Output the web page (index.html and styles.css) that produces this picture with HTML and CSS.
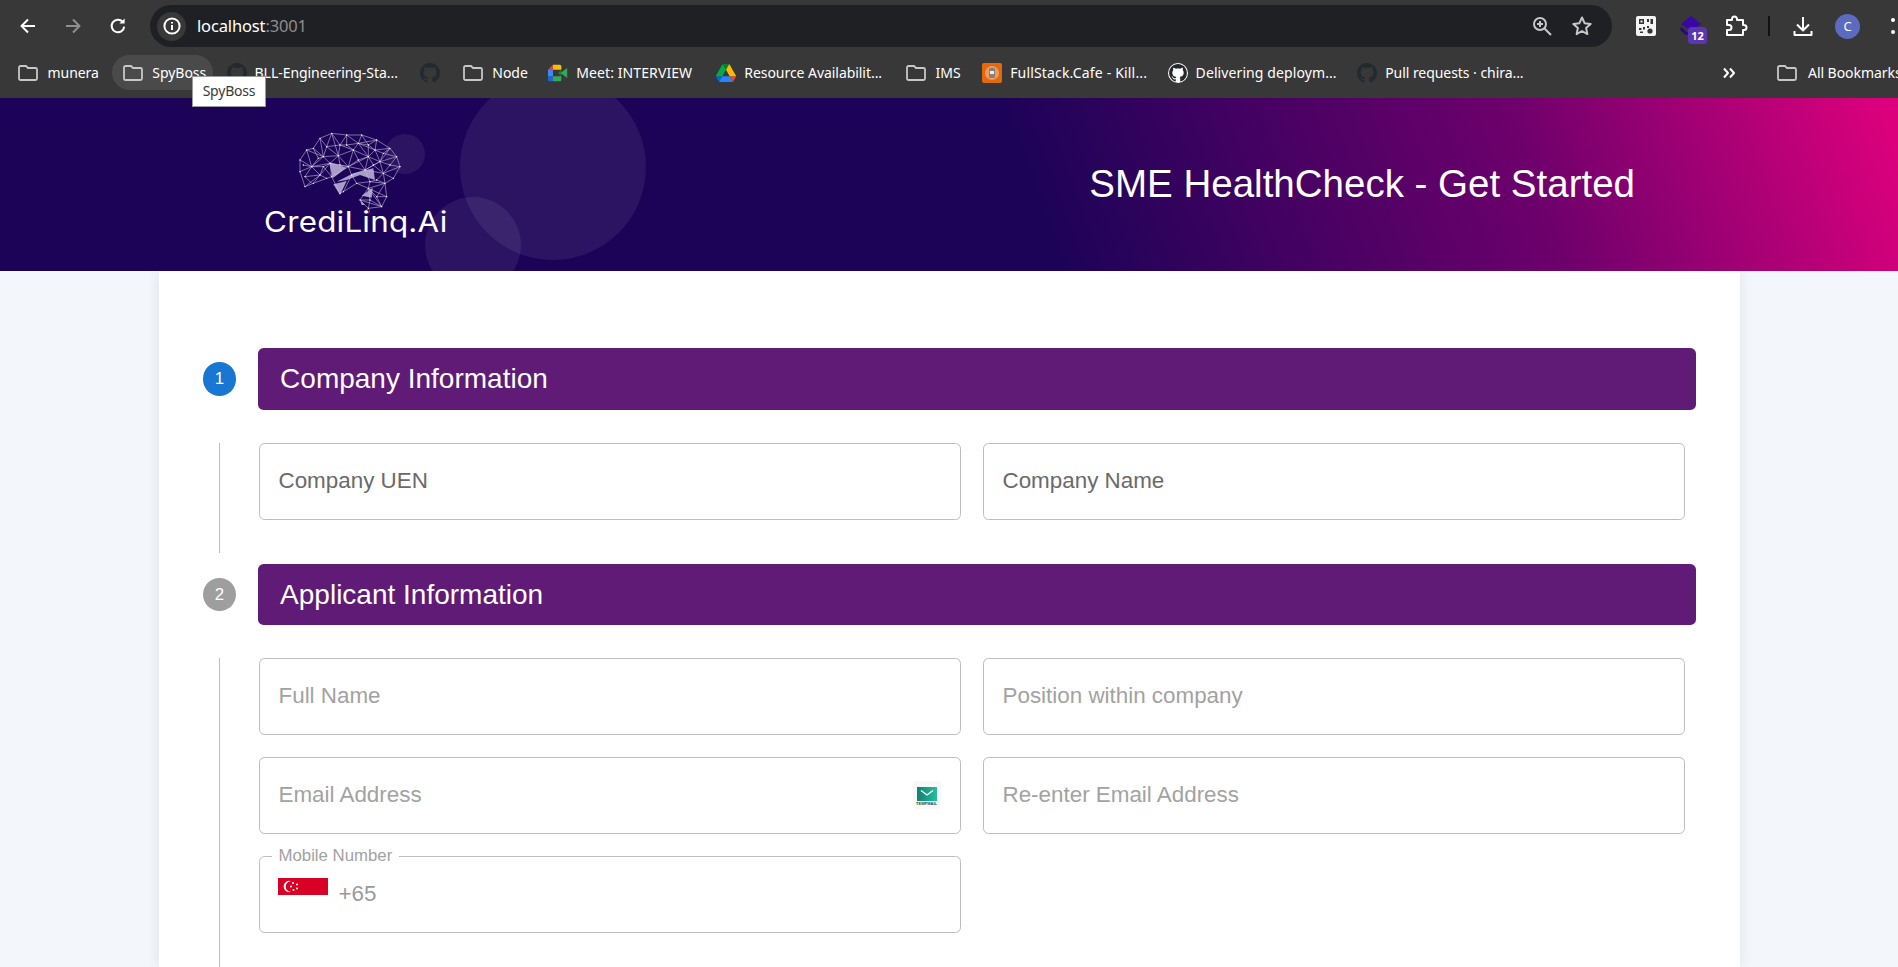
FILE: index.html
```html
<!DOCTYPE html>
<html lang="en">
<head>
<meta charset="utf-8">
<title>SME HealthCheck - Get Started</title>
<link rel="stylesheet" href="styles.css">
</head>
<body>
<div class="browser">
  <div class="toolbar">
    <div class="nav-btn"><svg width="20" height="20" viewBox="0 0 20 20"><path d="M17 10H4M10 3.5 3.5 10l6.5 6.5" class="ic-white"/></svg></div>
    <div class="nav-btn"><svg width="20" height="20" viewBox="0 0 20 20"><path d="M3 10h13M10 3.5l6.5 6.5-6.5 6.5" class="ic-grey"/></svg></div>
    <div class="nav-btn"><svg width="20" height="20" viewBox="0 0 20 20"><path d="M16.2 10.6a6.3 6.3 0 1 1-1.6-4.9" class="ic-white"/><path d="M16.6 2.4v5.2h-5.2z" fill="#fff"/></svg></div>
    <div class="omnibox">
      <div class="site-chip"><svg width="20" height="20" viewBox="0 0 20 20"><circle cx="10" cy="10" r="7.6" class="ic-white"/><path d="M10 9v5M10 6v1.6" class="ic-white"/></svg></div>
      <span class="url">localhost<span class="url-port">:3001</span></span>
      <div class="omni-right">
        <svg width="22" height="22" viewBox="0 0 22 22"><circle cx="9" cy="9" r="6" class="ic-soft"/><path d="M13.5 13.5 20 20M6 9h6M9 6v6" class="ic-soft"/></svg>
        <svg width="22" height="22" viewBox="0 0 22 22"><path d="m11 2.5 2.6 5.7 6.1.7-4.6 4.1 1.3 6.1L11 16l-5.4 3.1 1.3-6.1-4.6-4.1 6.1-.7z" class="ic-soft"/></svg>
      </div>
    </div>
    <div class="tools">
      <div class="slot slot-qr"><svg width="20" height="20" viewBox="0 0 20 20"><rect width="20" height="20" rx="2" fill="#f4f4f4"/><path d="M3 3h5v5H3zM4.500 4.500v2h2v-2zM11 3h2v3h-2zM14.500 3H17v5h-2.500zM3 12h2.500v2H3zM7 11h2v2.500H7zM4 15.500h3V17H4zM11 10h2v2h-2z" fill="#333" fill-rule="evenodd"/><circle cx="14" cy="15" r="2.600" fill="#333"/></svg></div>
      <div class="slot slot-ext">
        <svg width="24" height="24" viewBox="0 0 24 24"><path d="M12 2 22 10 12 17 2 10z" fill="#3a06a8"/><path d="M2 13l8 7-3 1-6-5z" fill="#25087a"/></svg>
        <span class="badge">12</span>
      </div>
      <div class="slot slot-puzzle"><svg width="24" height="24" viewBox="0 0 24 24"><path d="M3 6h5V5a2.5 2.5 0 0 1 5 0v1h6v5h1a2.5 2.5 0 0 1 0 5h-1v5H3v-5h2a2.5 2.5 0 0 0 0-5H3z" class="ic-white"/></svg></div>
      <div class="tool-sep"></div>
      <div class="slot slot-dl"><svg width="24" height="24" viewBox="0 0 24 24"><path d="M12 3v13M6 10.500l6 6 6-6M3.500 17v4h17v-4" class="ic-white"/></svg></div>
      <div class="avatar">C</div>
      <div class="menu-dots"><i></i><i></i></div>
    </div>
  </div>
  <div class="bookmarks">
    <div class="bm"><svg class="folder" viewBox="0 0 20 16"><path d="M1 2.500A1.500 1.500 0 0 1 2.500 1H8l2 2h7.500A1.500 1.500 0 0 1 19 4.500v9a1.500 1.500 0 0 1-1.500 1.500h-15A1.500 1.500 0 0 1 1 13.500z"/></svg><span>munera</span></div>
    <div class="bm bm-hover"><svg class="folder" viewBox="0 0 20 16"><path d="M1 2.500A1.500 1.500 0 0 1 2.500 1H8l2 2h7.500A1.500 1.500 0 0 1 19 4.500v9a1.500 1.500 0 0 1-1.500 1.500h-15A1.500 1.500 0 0 1 1 13.500z"/></svg><span>SpyBoss</span></div>
    <div class="bm"><svg class="gh" viewBox="0 0 16 16"><path class="gh-dark" d="M8 0C3.580 0 0 3.580 0 8c0 3.540 2.290 6.530 5.470 7.590.4.070.55-.17.55-.38 0-.19-.01-.82-.01-1.490-2.010.37-2.530-.49-2.690-.94-.09-.23-.48-.94-.82-1.130-.28-.15-.68-.52-.01-.53.63-.01 1.080.58 1.230.82.72 1.210 1.870.87 2.330.66.070-.52.28-.87.51-1.070-1.780-.2-3.640-.89-3.640-3.950 0-.87.31-1.590.82-2.150-.08-.2-.36-1.020.08-2.120 0 0 .67-.21 2.200.82.64-.18 1.320-.27 2-.27.68 0 1.360.09 2 .27 1.530-1.040 2.200-.82 2.200-.82.44 1.100.16 1.920.08 2.120.51.56.82 1.270.82 2.150 0 3.070-1.870 3.750-3.650 3.950.29.25.54.73.54 1.480 0 1.070-.01 1.930-.01 2.200 0 .21.15.46.55.38A8.013 8.013 0 0 0 16 8c0-4.420-3.580-8-8-8z"/></svg><span>BLL-Engineering-Sta...</span></div>
    <div class="bm bm-icon"><svg class="gh" viewBox="0 0 16 16"><path class="gh-dark" d="M8 0C3.580 0 0 3.580 0 8c0 3.540 2.290 6.530 5.470 7.590.4.070.55-.17.55-.38 0-.19-.01-.82-.01-1.490-2.010.37-2.530-.49-2.690-.94-.09-.23-.48-.94-.82-1.130-.28-.15-.68-.52-.01-.53.63-.01 1.080.58 1.230.82.72 1.210 1.870.87 2.330.66.070-.52.28-.87.51-1.070-1.780-.2-3.640-.89-3.640-3.950 0-.87.31-1.590.82-2.150-.08-.2-.36-1.020.08-2.120 0 0 .67-.21 2.200.82.64-.18 1.320-.27 2-.27.68 0 1.360.09 2 .27 1.530-1.040 2.200-.82 2.200-.82.44 1.100.16 1.920.08 2.120.51.56.82 1.270.82 2.150 0 3.070-1.870 3.750-3.650 3.950.29.25.54.73.54 1.480 0 1.070-.01 1.930-.01 2.200 0 .21.15.46.55.38A8.013 8.013 0 0 0 16 8c0-4.420-3.580-8-8-8z"/></svg></div>
    <div class="bm"><svg class="folder" viewBox="0 0 20 16"><path d="M1 2.500A1.500 1.500 0 0 1 2.500 1H8l2 2h7.500A1.500 1.500 0 0 1 19 4.500v9a1.500 1.500 0 0 1-1.500 1.500h-15A1.500 1.500 0 0 1 1 13.500z"/></svg><span>Node</span></div>
    <div class="bm bm-wide"><svg class="fav fav-meet" viewBox="0 0 24 20"><path d="M0 6 6 0v6z" fill="#ea4335"/><path d="M0 6h6v8H0z" fill="#4285f4"/><path d="M0 14h6v6H2a2 2 0 0 1-2-2z" fill="#1967d2"/><path d="M6 0h8a2 2 0 0 1 2 2v4H6z" fill="#fbbc04"/><path d="M6 14h10v4a2 2 0 0 1-2 2H6z" fill="#34a853"/><path d="M16 6v8l-4-4z" fill="#188038"/><path d="M15 10l8-6v12z" fill="#34a853"/></svg><span>Meet: INTERVIEW</span></div>
    <div class="bm"><svg class="fav" viewBox="0 0 87.300 78"><path d="m6.600 66.850 3.850 6.650c.8 1.400 1.950 2.500 3.300 3.300l13.750-23.800h-27.500c0 1.550.4 3.100 1.200 4.500z" fill="#0066da"/><path d="m43.650 25-13.750-23.800c-1.350.8-2.500 1.900-3.300 3.300l-25.400 44a9.060 9.060 0 0 0-1.200 4.500h27.500z" fill="#00ac47"/><path d="m73.550 76.800c1.350-.8 2.500-1.900 3.300-3.300l1.600-2.750 7.650-13.250c.8-1.400 1.200-2.950 1.200-4.500h-27.502l5.852 11.500z" fill="#ea4335"/><path d="m43.650 25 13.750-23.800c-1.350-.8-2.900-1.200-4.500-1.200h-18.500c-1.600 0-3.150.45-4.500 1.200z" fill="#00832d"/><path d="m59.800 53h-32.300l-13.750 23.800c1.350.8 2.900 1.200 4.500 1.200h50.800c1.600 0 3.150-.45 4.500-1.200z" fill="#2684fc"/><path d="m73.400 26.500-12.700-22c-.8-1.400-1.950-2.500-3.300-3.300l-13.750 23.800 16.150 28h27.450c0-1.550-.4-3.100-1.200-4.500z" fill="#ffba00"/></svg><span>Resource Availabilit...</span></div>
    <div class="bm"><svg class="folder" viewBox="0 0 20 16"><path d="M1 2.500A1.500 1.500 0 0 1 2.500 1H8l2 2h7.500A1.500 1.500 0 0 1 19 4.500v9a1.500 1.500 0 0 1-1.500 1.500h-15A1.500 1.500 0 0 1 1 13.500z"/></svg><span>IMS</span></div>
    <div class="bm bm-wider"><svg class="fav-sq" viewBox="0 0 20 20"><rect width="20" height="20" rx="2" fill="#e26a0d"/><circle cx="10" cy="10" r="7" fill="#ee9a62"/><rect x="7" y="5" width="6" height="10" rx="1" fill="#8c8078"/><rect x="8" y="8" width="4" height="3" fill="#eee"/></svg><span>FullStack.Cafe - Kill...</span></div>
    <div class="bm bm-wide"><svg class="gh" viewBox="-1 -1 18 18"><circle cx="8" cy="8" r="9" fill="#fff"/><path fill="#24292f" d="M8 0C3.580 0 0 3.580 0 8c0 3.540 2.290 6.530 5.470 7.590.4.070.55-.17.55-.38 0-.19-.01-.82-.01-1.490-2.010.37-2.530-.49-2.690-.94-.09-.23-.48-.94-.82-1.130-.28-.15-.68-.52-.01-.53.63-.01 1.080.58 1.230.82.72 1.210 1.870.87 2.330.66.070-.52.28-.87.51-1.070-1.780-.2-3.640-.89-3.640-3.950 0-.87.31-1.590.82-2.150-.08-.2-.36-1.020.08-2.120 0 0 .67-.21 2.200.82.64-.18 1.320-.27 2-.27.68 0 1.360.09 2 .27 1.530-1.040 2.200-.82 2.200-.82.44 1.100.16 1.920.08 2.120.51.56.82 1.270.82 2.150 0 3.070-1.870 3.750-3.650 3.950.29.25.54.73.54 1.480 0 1.070-.01 1.930-.01 2.200 0 .21.15.46.55.38A8.013 8.013 0 0 0 16 8c0-4.420-3.580-8-8-8z"/></svg><span>Delivering deploym...</span></div>
    <div class="bm"><svg class="gh" viewBox="0 0 16 16"><path class="gh-dark" d="M8 0C3.580 0 0 3.580 0 8c0 3.540 2.290 6.530 5.470 7.590.4.070.55-.17.55-.38 0-.19-.01-.82-.01-1.490-2.010.37-2.530-.49-2.690-.94-.09-.23-.48-.94-.82-1.130-.28-.15-.68-.52-.01-.53.63-.01 1.080.58 1.230.82.72 1.210 1.870.87 2.330.66.070-.52.28-.87.51-1.070-1.780-.2-3.640-.89-3.640-3.950 0-.87.31-1.590.82-2.150-.08-.2-.36-1.020.08-2.120 0 0 .67-.21 2.200.82.64-.18 1.320-.27 2-.27.68 0 1.360.09 2 .27 1.530-1.040 2.200-.82 2.200-.82.44 1.100.16 1.920.08 2.120.51.56.82 1.270.82 2.150 0 3.070-1.870 3.750-3.650 3.950.29.25.54.73.54 1.480 0 1.070-.01 1.930-.01 2.200 0 .21.15.46.55.38A8.013 8.013 0 0 0 16 8c0-4.420-3.580-8-8-8z"/></svg><span>Pull requests · chira...</span></div>
    <div class="bm-end">
      <svg class="chev" viewBox="0 0 14 12"><path d="M2 1.500 6 6l-4 4.500M8 1.500 12 6l-4 4.500" class="ic-white"/></svg>
      <div class="bm-sep"></div>
      <svg class="folder" viewBox="0 0 20 16"><path d="M1 2.500A1.500 1.500 0 0 1 2.500 1H8l2 2h7.500A1.500 1.500 0 0 1 19 4.500v9a1.500 1.500 0 0 1-1.500 1.500h-15A1.500 1.500 0 0 1 1 13.500z"/></svg>
      <span class="bm-all">All Bookmarks</span>
    </div>
  </div>
  <div class="tooltip">SpyBoss</div>
</div>

<header class="hero">
  <i class="bubble bubble-big"></i>
  <i class="bubble bubble-small"></i>
  <i class="bubble bubble-low"></i>
  <div class="logo">
    <svg class="logo-mark" viewBox="0 0 360 270">
      <path class="mesh-fill" d="M118 112 170 128 128 160zM140 170 190 145 250 130 255 165 210 150 170 165zM130 178 170 168 150 210zM215 212 248 188 245 218zM210 225 225 240 215 240z"/>
      <path class="mesh" d="M30 105 50 75 70 70 90 40 125 25 170 30 215 30 260 45 300 70 320 95 330 125 310 160 285 175 290 215 275 245 235 250 210 225 235 190 200 175 160 200 150 205 125 155 110 160 70 175 45 185 30 140ZM50 75 100 95 70 70M90 40 100 95 145 92 125 25M125 25 150 60 170 30M150 60 145 92 190 75 150 60M170 30 205 55 215 30M205 55 190 75 235 95 205 55 260 45 255 75 205 55M255 75 235 95 270 110 255 75 300 70 270 110 320 95M30 105 65 125 50 75M65 125 100 95 120 115 145 92 175 125 190 75M175 125 235 95 225 135 175 125 120 115 65 125 90 150 120 115M30 140 65 125M225 135 270 110 280 145 225 135M280 145 330 125M280 145 310 160M90 150 45 185M90 150 110 160M125 155 120 115M125 155 175 125 185 150 225 135M280 145 285 175 240 170 225 135M240 170 200 175 185 150 160 200M240 170 235 190 285 175M235 190 290 215M235 190 275 245M210 225 275 245M70 70 85 100 65 125M85 100 100 95M40 120 65 125 45 155 65 175M45 155 90 150 70 175M100 95 110 65 145 92M110 65 150 60M110 65 90 40M125 25 110 65M170 30 170 60 190 75M170 60 205 55M170 60 150 60M235 60 205 55M235 60 215 30M235 60 260 45M235 60 255 75M235 60 235 95M280 85 255 75M280 85 300 70M280 85 270 110M280 85 320 95M300 120 270 110M300 120 320 95M300 120 330 125M300 120 280 145M145 92 150 120 120 115M150 120 175 125M205 105 190 75M205 105 235 95M205 105 175 125M205 105 225 135M250 120 235 95M250 120 270 110M250 120 225 135M250 120 280 145M100 125 120 115M100 125 65 125M100 125 90 150M100 125 125 155M260 165 280 145M260 165 240 170M260 165 285 175M260 215 235 190M260 215 290 215M260 215 275 245M260 215 285 175M240 225 235 190M240 225 210 225M240 225 235 250M240 225 275 245"/>
      <path class="mesh-dots" d="M30 105h0M50 75h0M70 70h0M90 40h0M125 25h0M170 30h0M215 30h0M260 45h0M300 70h0M320 95h0M330 125h0M310 160h0M285 175h0M290 215h0M275 245h0M235 250h0M210 225h0M235 190h0M200 175h0M160 200h0M150 205h0M125 155h0M110 160h0M70 175h0M45 185h0M30 140h0M100 95h0M145 92h0M150 60h0M190 75h0M205 55h0M235 95h0M255 75h0M270 110h0M65 125h0M120 115h0M175 125h0M225 135h0M90 150h0M280 145h0M185 150h0M240 170h0M85 100h0M110 65h0M170 60h0M235 60h0M280 85h0M300 120h0M150 120h0M205 105h0M250 120h0M100 125h0M260 165h0M260 215h0M240 225h0M40 120h0M45 155h0"/>
      <circle class="mesh-ring" cx="234" cy="258" r="5"/>
    </svg>
    <div class="logo-text">CrediLinq.Ai</div>
  </div>
  <h1 class="hero-title">SME HealthCheck - Get Started</h1>
</header>

<main class="card">
  <section class="step">
    <div class="step-head">
      <div class="step-num step-active">1</div>
      <h2 class="step-title">Company Information</h2>
    </div>
    <div class="step-body">
      <div class="fields">
        <label class="field field-filled">Company UEN</label>
        <label class="field field-filled">Company Name</label>
      </div>
    </div>
  </section>
  <section class="step">
    <div class="step-head">
      <div class="step-num">2</div>
      <h2 class="step-title">Applicant Information</h2>
    </div>
    <div class="step-body step-body-long">
      <div class="fields">
        <label class="field">Full Name</label>
        <label class="field">Position within company</label>
        <label class="field field-mail">Email Address
          <span class="mail-ext">
            <svg width="20" height="14" viewBox="0 0 20 14"><defs><linearGradient id="mg" x1="0" x2="1"><stop offset="0" stop-color="#137f73"/><stop offset="1" stop-color="#25c0a0"/></linearGradient></defs><rect width="20" height="14" fill="url(#mg)"/><path d="M4 3.500 10 8l6-4.500" fill="none" stroke="#fff" stroke-width="1.300"/></svg>
            <span class="mail-name">TEMPMAIL</span>
          </span>
        </label>
        <label class="field">Re-enter Email Address</label>
        <fieldset class="phone">
          <legend class="phone-legend">Mobile Number</legend>
          <svg class="flag" viewBox="0 0 50 34"><rect width="50" height="17" fill="#d90026"/><path d="M13 3.200a5.600 5.600 0 1 0 0 10.600 5 5 0 1 1 0-10.600z" fill="#fff"/><g fill="#fff"><circle cx="15" cy="5" r="1"/><circle cx="19" cy="6.500" r="1"/><circle cx="13" cy="8.500" r="1"/><circle cx="19" cy="10.500" r="1"/><circle cx="15.500" cy="12" r="1"/></g></svg>
          <span class="dial">+65</span>
        </fieldset>
      </div>
    </div>
  </section>
</main>
</body>
</html>
```

FILE: styles.css
```css
* { box-sizing: border-box; }

html, body { margin: 0; height: 967px; overflow: hidden; }

body {
  background: #f3f7fb;
  font-family: "Liberation Sans", Arial, sans-serif;
  color: #666;
}

svg { display: block; flex: none; }

.ic-white, .ic-grey, .ic-soft { fill: none; stroke-width: 2; stroke-linejoin: round; }
.ic-white { stroke: #fff; }
.ic-grey { stroke: #8f8f8f; }
.ic-soft { stroke: #c7c7c7; }

/* browser chrome */
.browser { position: relative; height: 98px; background: #383838; color: #fff; font-family: "Noto Sans", sans-serif; }

.toolbar { display: flex; height: 52px; padding: 5px 0 0 5px; }

.nav-btn { width: 45px; height: 42px; display: flex; align-items: center; justify-content: center; }

.omnibox {
  width: 1462px;
  height: 42px;
  margin-left: 10px;
  padding: 0 19px 0 7px;
  display: flex;
  align-items: center;
  border-radius: 21px;
  background: #1f2023;
}

.site-chip { width: 29px; height: 29px; border-radius: 50%; background: #383838; display: flex; align-items: center; justify-content: center; }

.url { margin: 0 0 2px 11px; font-size: 16.500px; letter-spacing: -.15px; }
.url-port { color: #8e8e8e; }

.omni-right { margin-left: auto; display: flex; gap: 18px; }

.tools { flex: 1; display: flex; align-items: center; height: 42px; padding-left: 14px; }

.slot { position: relative; display: flex; justify-content: center; align-items: center; height: 42px; }
.slot-qr { width: 40px; }
.slot-ext { width: 50px; }
.slot-puzzle { width: 40px; }
.slot-dl { width: 40px; margin-left: 13px; }

.badge {
  position: absolute;
  right: 9px;
  bottom: 3px;
  width: 19px;
  height: 17px;
  border-radius: 4px;
  background: #5e35b1;
  font: 700 11px/17px "Noto Sans", sans-serif;
  text-align: center;
}

.tool-sep { width: 2px; height: 20px; margin-left: 12px; background: #111; }

.avatar {
  width: 25px;
  height: 25px;
  margin-left: 12px;
  border-radius: 50%;
  background: #5c6bc0;
  font-size: 13px;
  line-height: 25px;
  text-align: center;
}

.menu-dots { display: flex; flex-direction: column; gap: 8px; margin-left: 31px; }
.menu-dots i { width: 4px; height: 4px; border-radius: 50%; background: #fff; }

.bookmarks { display: flex; align-items: center; height: 46px; padding: 3px 0 8px 7px; gap: 6px; font-size: 14px; letter-spacing: -.05px; white-space: nowrap; }

.bm { display: flex; align-items: center; height: 35px; padding: 0 7px 0 11px; gap: 8px; border-radius: 18px; flex: none; }
.bm-hover { background: #4a4a4a; }
.bm-icon { padding: 0 6px 0 12.600px; }
.bm-wide { letter-spacing: .1px; }
.bm-wider { letter-spacing: .17px; }

.folder { width: 20px; height: 16px; margin-right: 1.500px; fill: none; stroke: #c7c7c7; stroke-width: 1.800; }
.gh { width: 20px; height: 20px; margin-left: -3.600px; }
.gh-dark { fill: #24292f; }
.fav { width: 20px; height: 18px; }
.fav-meet { margin-left: -3.600px; }
.fav-sq { width: 20px; height: 20px; margin-left: -2.400px; }

.bm-end { margin-left: auto; display: flex; align-items: center; flex: none; width: 176px; height: 35px; }
.chev { width: 14px; height: 12px; }
.bm-sep { width: 2px; height: 22px; margin: 0 19px 0 22px; background: #111; }
.bm-all { margin-left: 9.500px; }

.tooltip {
  position: absolute;
  left: 192px;
  top: 76px;
  width: 74px;
  height: 31px;
  z-index: 5;
  background: #fff;
  border: 1px solid #9a9a9a;
  color: #3a3a3a;
  font-size: 14px;
  line-height: 27px;
  text-align: center;
  letter-spacing: -.2px;
}

/* hero */
.hero {
  position: relative;
  display: flex;
  align-items: flex-start;
  height: 173px;
  padding: 27px 263px 0 264px;
  overflow: hidden;
  color: #fff;
  background: linear-gradient(70deg, #1c0357 54%, #6e006c 80%, #dc007d 99%);
}

.bubble { position: absolute; border-radius: 50%; background: rgba(255, 255, 255, .07); }
.bubble-big { left: 460px; top: -24px; width: 186px; height: 186px; }
.bubble-small { left: 385px; top: 36px; width: 40px; height: 40px; }
.bubble-low { left: 425px; top: 99px; width: 96px; height: 96px; }

.logo { position: relative; width: 186px; }
.logo-mark { width: 120px; height: 90px; margin-left: 26px; }
.logo-text {
  margin-top: -7px;
  font-family: Inter, sans-serif;
  font-weight: 400;
  font-size: 28px;
  line-height: 28px;
  white-space: nowrap;
  letter-spacing: .2px;
  transform: scaleX(1.12);
  transform-origin: left center;
}

.mesh-fill { fill: #a79dc8; }
.mesh { fill: none; stroke: #c2b9dd; stroke-width: 1.800; }
.mesh-dots { fill: none; stroke: #fff; stroke-width: 4; stroke-linecap: round; }
.mesh-ring { fill: none; stroke: #e0106f; stroke-width: 3; }

.hero-title { position: relative; margin: 32px 0 0 auto; font-size: 38.500px; line-height: 54px; font-weight: 400; }

/* card */
.card {
  width: 1581px;
  margin: 0 auto;
  height: 696px;
  padding: 77px 44px 0;
  background: #fff;
  box-shadow: 0 0 14px rgba(0, 0, 0, .09);
}

.step-head { display: flex; align-items: center; gap: 22px; }

.step-num {
  width: 33.600px;
  height: 33.600px;
  flex: none;
  border-radius: 50%;
  background: #9e9e9e;
  color: #fff;
  font-size: 16.800px;
  line-height: 33.600px;
  text-align: center;
}
.step-active { background: #1976d2; }

.step-title {
  flex: 1;
  height: 61.600px;
  margin: 0;
  padding-left: 22px;
  border-radius: 5.600px;
  background: #5f1b75;
  color: #fff;
  font-size: 28px;
  font-weight: 400;
  line-height: 61.600px;
}

.step-body {
  margin: 33px 0 11px 16px;
  padding: 0 11px 33px 39px;
  border-left: 1px solid #bdbdbd;
}
.step-body-long { height: 400px; }

.fields { display: grid; grid-template-columns: 702px 702px; column-gap: 22px; row-gap: 22px; }

.field {
  position: relative;
  display: flex;
  align-items: center;
  height: 77px;
  padding: 0 0 2px 19px;
  border: 1px solid #bdbdbd;
  border-radius: 5.600px;
  font-size: 22.400px;
  color: #a2a2a2;
}
.field-filled { padding-bottom: 0; color: #6a6a6a; }

.mail-ext {
  position: absolute;
  right: 19px;
  top: 23px;
  width: 28px;
  height: 28px;
  padding-top: 6px;
  display: flex;
  flex-direction: column;
  align-items: center;
  background: #f7f9f9;
  border-radius: 3px;
}
.mail-name { font-size: 4px; line-height: 5px; color: #184a47; font-weight: 700; }

.phone {
  grid-column: 1;
  display: flex;
  align-items: flex-start;
  height: 85px;
  margin: -8px 0 0;
  min-width: 0;
  padding: 0 0 0 18px;
  border: 1px solid #bdbdbd;
  border-radius: 5.600px;
}
.phone-legend { margin-left: -6px; padding: 0 7px; font-size: 16.800px; line-height: 16px; color: #a2a2a2; }
.flag { width: 50px; height: 34px; margin-top: 14px; }
.dial { margin: 17px 0 0 11px; font-size: 22.400px; line-height: 26px; color: #9a9a9a; }
```
